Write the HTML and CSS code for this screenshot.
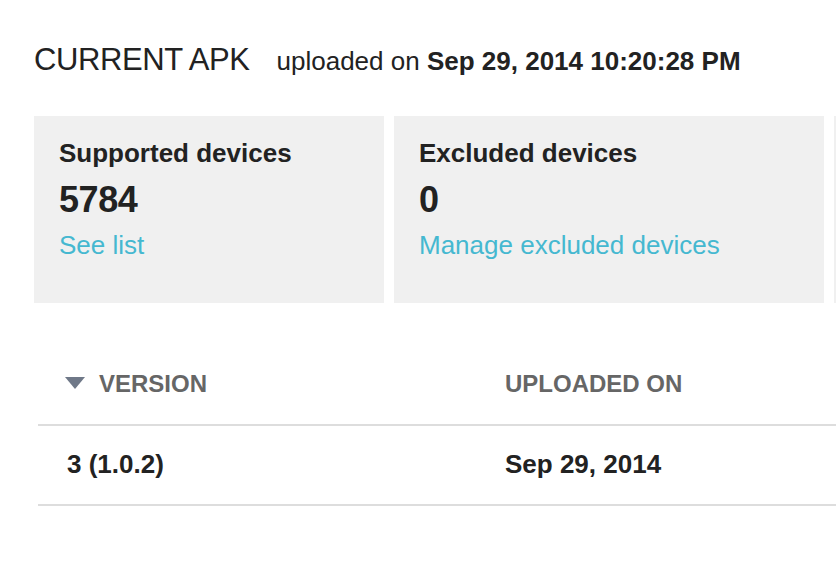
FILE: index.html
```html
<!DOCTYPE html>
<html>
<head>
<meta charset="utf-8">
<link rel="stylesheet" href="styles.css">
</head>
<body>
<div class="page">
  <div class="title-row">
    <h1 class="title">CURRENT APK</h1>
    <span class="uploaded">uploaded on <b>Sep 29, 2014 10:20:28 PM</b></span>
  </div>
  <div class="cards">
    <div class="card">
      <div class="card-label">Supported devices</div>
      <div class="card-num">5784</div>
      <a class="card-link" href="#">See list</a>
    </div>
    <div class="card">
      <div class="card-label">Excluded devices</div>
      <div class="card-num">0</div>
      <a class="card-link" href="#">Manage excluded devices</a>
    </div>
    <div class="card"></div>
  </div>
  <div class="table">
    <div class="row head">
      <div class="cell c1"><svg class="sort" width="20" height="12" viewBox="0 0 20 12"><polygon points="0,0 20,0 10,12" fill="#6f7888"/></svg><span>VERSION</span></div>
      <div class="cell c2">UPLOADED ON</div>
    </div>
    <div class="row data">
      <div class="cell c1 v">3 (1.0.2)</div>
      <div class="cell c2">Sep 29, 2014</div>
    </div>
  </div>
</div>
</body>
</html>
```
FILE: styles.css
```css
html, body {
  margin: 0;
  padding: 0;
  background: #fff;
  overflow: hidden;
}
body {
  font-family: "Liberation Sans", Arial, Helvetica, sans-serif;
  color: #222;
  width: 836px;
  height: 564px;
}
.page {
  padding: 40px 0 0 34px;
  overflow: hidden;
}
.title-row {
  display: flex;
  align-items: baseline;
  height: 40px;
}
.title {
  margin: 0;
  font-size: 31px;
  font-weight: normal;
  line-height: 40px;
  color: #222;
  letter-spacing: -0.4px;
}
.uploaded {
  margin-left: 27px;
  font-size: 26px;
  line-height: 40px;
  color: #222;
  white-space: nowrap;
}
.uploaded b {
  font-weight: bold;
}
.cards {
  margin-top: 36px;
  width: 802px;
  overflow: hidden;
  display: grid;
  grid-template-columns: 350px 430px 430px;
  column-gap: 10px;
}
.card {
  background: #f0f0f0;
  height: 187px;
  box-sizing: border-box;
  padding: 22px 0 0 25px;
  display: flex;
  flex-direction: column;
  align-items: flex-start;
}
.card-label {
  font-size: 26px;
  line-height: 30px;
  font-weight: bold;
  color: #222;
}
.card-num {
  margin-top: 12px;
  font-size: 36px;
  line-height: 40px;
  font-weight: bold;
  color: #222;
  letter-spacing: -0.4px;
}
.card-link {
  margin-top: 10px;
  font-size: 26px;
  line-height: 30px;
  color: #45b8d0;
  text-decoration: none;
}
.table {
  margin-top: 37px;
  margin-left: 4px;
  width: 798px;
}
.row {
  display: flex;
  border-bottom: 2px solid #dddddd;
}
.row.head {
  padding: 29px 0 25px 0;
  font-size: 24px;
  line-height: 30px;
  font-weight: bold;
  color: #666;
}
.row.data {
  padding: 23px 0 25px 0;
  font-size: 26px;
  line-height: 30px;
  font-weight: bold;
  color: #222;
}
.cell.c1 {
  width: 467px;
  padding-left: 27px;
  box-sizing: border-box;
  display: flex;
  align-items: center;
}
.cell.c1.v {
  padding-left: 29px;
}
.sort {
  margin-right: 14px;
  margin-top: -2px;
}
```
